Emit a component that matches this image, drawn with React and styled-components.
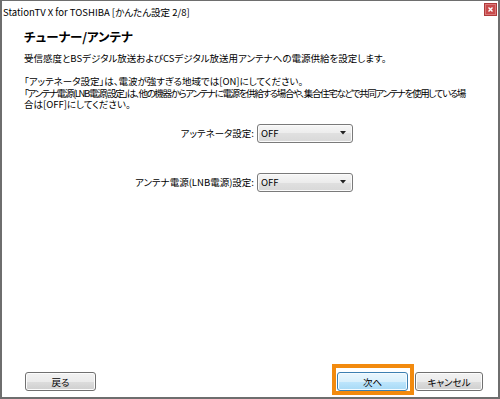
import React from "react";
import styled, { createGlobalStyle } from "styled-components";

const Global = createGlobalStyle`
  html, body { margin: 0; padding: 0; background: #ffffff; }
  body {
    font-family: "Noto Sans CJK JP", "Noto Sans", sans-serif;
    font-feature-settings: "palt";
    color: #000;
  }
`;

const Window = styled.div`
  box-sizing: border-box;
  width: 500px;
  height: 399px;
  border: 2px solid #6e6e6e;
  border-top-width: 1px;
  background: #fff;
  display: flex;
  flex-direction: column;
`;

const TitleBar = styled.div`
  height: 21px;
  display: flex;
  align-items: center;
  justify-content: space-between;
  padding: 0 1px;
  font-size: 9.5px;
  line-height: 12px;
`;

const TitleText = styled.span`
  white-space: nowrap;
`;

const CloseButton = styled.div`
  align-self: flex-start;
  margin-top: 2px;
  box-sizing: border-box;
  width: 13px;
  height: 13px;
  background: #c94a4b;
  border: 1px solid #b03a3b;
  box-shadow: inset 0 0 0 1px #d9797a;
  display: flex;
  align-items: center;
  justify-content: center;
`;

const Content = styled.div`
  flex: 1;
  padding: 7px 0 0 22px;
  display: flex;
  flex-direction: column;
`;

const Heading = styled.h1`
  margin: 0;
  font-size: 12.5px;
  line-height: 15px;
  font-weight: 700;
  white-space: nowrap;
`;

const Para = styled.p`
  margin: ${(p) => p.$top}px 0 0 0;
  font-size: 9.5px;
  line-height: 11.5px;
`;

const Line = styled.span`
  display: block;
  white-space: nowrap;
  letter-spacing: ${(p) => p.$track || 0}px;
`;

const FormGrid = styled.div`
  margin-top: 13px;
  display: grid;
  grid-template-columns: 230px 96px;
  column-gap: 3px;
  row-gap: 30px;
  align-items: center;
`;

const Label = styled.label`
  text-align: right;
  font-size: 9.5px;
  white-space: nowrap;
`;

const SelectBox = styled.div`
  box-sizing: border-box;
  height: 19px;
  border: 1px solid #7a7a7a;
  border-radius: 3px;
  background: linear-gradient(#f6f6f6, #ececec 50%, #e0e0e0 50%, #d8d8d8);
  box-shadow: inset 0 0 0 1px #fbfbfb;
  display: flex;
  align-items: center;
  justify-content: space-between;
  padding: 0 6px 0 3px;
  font-size: 9.5px;
`;

const Footer = styled.div`
  display: flex;
  align-items: center;
  justify-content: space-between;
  padding: 0 15px 6px 23px;
`;

const ButtonGroup = styled.div`
  display: flex;
  gap: 7px;
`;

const Button = styled.button`
  box-sizing: border-box;
  width: ${(p) => p.$w || 71}px;
  height: 19px;
  padding: 0;
  font-family: inherit;
  font-feature-settings: "palt";
  font-size: 9.5px;
  color: #000;
  border-radius: 3px;
  border: 1px solid ${(p) => (p.$primary ? "#3c7fb1" : "#707070")};
  background: ${(p) =>
    p.$primary
      ? "linear-gradient(#eaf6fd, #d9f0fc 50%, #bee6fd 50%, #a7d9f5)"
      : "linear-gradient(#f2f2f2, #ebebeb 50%, #dddddd 50%, #cfcfcf)"};
  box-shadow: inset 0 0 0 1px ${(p) => (p.$primary ? "#f4fbff" : "#fcfcfc")};
`;

const Highlight = styled.div`
  position: relative;
  display: flex;
  &::after {
    content: "";
    position: absolute;
    top: -8px;
    bottom: -4px;
    left: -5px;
    right: -6px;
    border: 4px solid #f28a0e;
    pointer-events: none;
  }
`;

const Arrow = () => (
  <svg width="6" height="4" viewBox="0 0 6 4">
    <path d="M0 0H6L3 3.5Z" fill="#222" />
  </svg>
);

export default function App() {
  return (
    <>
      <Global />
      <Window>
        <TitleBar>
          <TitleText>StationTV X for TOSHIBA [かんたん設定 2/8]</TitleText>
          <CloseButton>
            <svg width="5" height="5" viewBox="0 0 5 5">
              <path d="M0.5 0.5L4.5 4.5M4.5 0.5L0.5 4.5" stroke="#fff" strokeWidth="1.4" />
            </svg>
          </CloseButton>
        </TitleBar>
        <Content>
          <Heading>チューナー/アンテナ</Heading>
          <Para $top={9}>
            <Line>受信感度とBSデジタル放送およびCSデジタル放送用アンテナへの電源供給を設定します。</Line>
          </Para>
          <Para $top={11.5}>
            <Line>「アッテネータ設定」は、電波が強すぎる地域では[ON]にしてください。</Line>
            <Line $track={-1.35}>
              「アンテナ電源(LNB電源)設定」は、他の機器からアンテナに電源を供給する場合や、集合住宅などで共同アンテナを使用している場
            </Line>
            <Line>合は[OFF]にしてください。</Line>
          </Para>
          <FormGrid>
            <Label>アッテネータ設定:</Label>
            <SelectBox>
              <span>OFF</span>
              <Arrow />
            </SelectBox>
            <Label>アンテナ電源(LNB電源)設定:</Label>
            <SelectBox>
              <span>OFF</span>
              <Arrow />
            </SelectBox>
          </FormGrid>
        </Content>
        <Footer>
          <Button>戻る</Button>
          <ButtonGroup>
            <Highlight>
              <Button $primary>次へ</Button>
            </Highlight>
            <Button $w={68}>キャンセル</Button>
          </ButtonGroup>
        </Footer>
      </Window>
    </>
  );
}
